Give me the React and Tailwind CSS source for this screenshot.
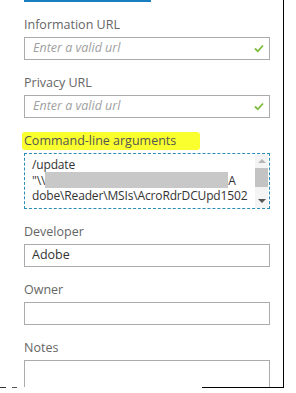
import React from 'react';

const font = { fontFamily: '"Segoe UI", "Open Sans", "Noto Sans", sans-serif' };

function Check() {
  return (
    <svg className="w-[10px] h-[9px]" viewBox="0 0 10 9" fill="none">
      <path d="M1 4.5 L3.8 7.3 L9 1.5" stroke="#7dbb3c" strokeWidth="1.8" />
    </svg>
  );
}

function Label({ children }) {
  return <div className="text-[12.5px] leading-[18px] text-[#666] mb-[3px]">{children}</div>;
}

function UrlField({ label }) {
  return (
    <div className="mt-[14px]">
      <Label>{label}</Label>
      <div className="h-[23px] border border-[#ababab] flex items-center justify-between pl-[8px] pr-[5px]">
        <span className="italic text-[12.5px] text-[#a0a0a0]">Enter a valid url</span>
        <Check />
      </div>
    </div>
  );
}

function TextField({ label, value, tall }) {
  return (
    <div className="mt-[14px]">
      <Label>{label}</Label>
      <div className={(tall ? 'h-[40px] ' : 'h-[23px] ') + 'border border-[#ababab] flex items-center px-[7px] text-[12.5px] text-[#333]'}>
        {value}
      </div>
    </div>
  );
}

export default function App() {
  return (
    <div className="w-[296px] h-[393px] bg-white overflow-hidden" style={font}>
      <div className="w-[284px] h-[387px] border-r border-black pl-[24px] pr-[13px] overflow-hidden">
        {/* top tab underline */}
        <div className="w-[127px] h-[2px] bg-[#1a7fc1]"></div>

        <UrlField label="Information URL" />
        <UrlField label="Privacy URL" />

        {/* Command-line arguments */}
        <div className="mt-[14px]">
          <div className="flex mb-[3px] -ml-[2px]">
            <span className="bg-[#faff2e] pl-[2px] pr-[24px] rounded-[3px] text-[12.5px] leading-[18px] text-[#555]">
              Command-line arguments
            </span>
          </div>
          <div className="h-[56px] border border-dashed border-[#2b8db3] flex">
            <div className="flex-1 pl-[7px] pt-[3px] text-[12px] tracking-[-0.15px] leading-[15px] text-[#333] overflow-hidden whitespace-nowrap">
              <div>/update</div>
              <div className="flex items-center">
                <span>"\\</span>
                <span className="inline-block w-[183px] h-[16px] bg-[#c8c8c8]"></span>
                <span>A</span>
              </div>
              <div>dobe\Reader\MSIs\AcroRdrDCUpd1502</div>
            </div>
            <div className="w-[13px] mr-[1px] flex flex-col items-center bg-[#f4f4f4]">
              <div className="h-[14px] flex items-center justify-center">
                <div className="w-0 h-0 border-l-[4px] border-r-[4px] border-b-[4px] border-l-transparent border-r-transparent border-b-[#b5b5b5]"></div>
              </div>
              <div className="w-[13px] h-[19px] bg-[#c3c3c3]"></div>
              <div className="flex-1"></div>
              <div className="h-[14px] flex items-center justify-center">
                <div className="w-0 h-0 border-l-[4px] border-r-[4px] border-t-[4px] border-l-transparent border-r-transparent border-t-[#555]"></div>
              </div>
            </div>
          </div>
        </div>

        <TextField label="Developer" value="Adobe" />
        <TextField label="Owner" value="" />
        <TextField label="Notes" value="" tall />
      </div>
      {/* cropped bottom edge */}
      <div className="flex h-[1px]">
        <div className="w-[6px] bg-[#333]"></div>
        <div className="w-[6px]"></div>
        <div className="w-[5px] bg-[#555]"></div>
        <div className="w-[185px]"></div>
        <div className="w-[82px] bg-black"></div>
      </div>
    </div>
  );
}
